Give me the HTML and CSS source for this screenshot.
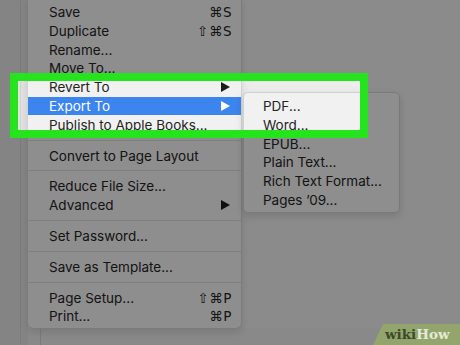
FILE: index.html
```html
<!DOCTYPE html>
<html>
<head>
<meta charset="utf-8">
<link rel="stylesheet" href="styles.css">
</head>
<body>
<div class="desktop">
  <div class="sidebar"><div class="sidebar-line"></div></div>
  <div class="window">
    <div class="window-top"></div>
    <div class="window-bottom"><div class="doc-edge"></div></div>
  </div>

  <div class="menu">
    <div class="item"><span>Save</span><span class="key">⌘S</span></div>
    <div class="item"><span>Duplicate</span><span class="key">⇧⌘S</span></div>
    <div class="item"><span>Rename...</span></div>
    <div class="item"><span>Move To...</span></div>
    <div class="item"><span>Revert To</span><span class="arrow"></span></div>
    <div class="item active"><span>Export To</span><span class="arrow"></span></div>
    <div class="item"><span>Publish to Apple Books...</span></div>
    <div class="sep"></div>
    <div class="item"><span>Convert to Page Layout</span></div>
    <div class="sep"></div>
    <div class="item"><span>Reduce File Size...</span></div>
    <div class="item"><span>Advanced</span><span class="arrow"></span></div>
    <div class="sep"></div>
    <div class="item"><span>Set Password...</span></div>
    <div class="sep"></div>
    <div class="item"><span>Save as Template...</span></div>
    <div class="sep"></div>
    <div class="item"><span>Page Setup...</span><span class="key">⇧⌘P</span></div>
    <div class="item"><span>Print...</span><span class="key">⌘P</span></div>
  </div>

  <div class="submenu">
    <div class="item sub"><span>PDF...</span></div>
    <div class="item sub"><span>Word...</span></div>
    <div class="item sub"><span>EPUB...</span></div>
    <div class="item sub"><span>Plain Text...</span></div>
    <div class="item sub"><span>Rich Text Format...</span></div>
    <div class="item sub"><span>Pages ’09...</span></div>
  </div>

  <div class="spotlight"></div>

  <div class="watermark"><span class="wiki">wiki</span><span class="how">How</span></div>
</div>
</body>
</html>
```

FILE: styles.css
```css
* { box-sizing: border-box; }
html, body {
  margin: 0;
  padding: 0;
  width: 460px;
  height: 345px;
  overflow: hidden;
}
body {
  font-family: Inter, "DejaVu Sans", sans-serif;
  font-size: 13.5px;
  color: #242424;
}
.desktop {
  position: relative;
  width: 460px;
  height: 345px;
  display: flex;
  background: #ececec;
}
.sidebar {
  width: 28px;
  flex: none;
  background: #e1e1e1;
  display: flex;
  justify-content: flex-end;
}
.sidebar-line {
  width: 1px;
  margin-right: 7px;
  background: #d2d2d2;
}
.window {
  flex: 1;
  display: flex;
  flex-direction: column;
}
.window-top { flex: 1; background: #ededed; }
.window-bottom {
  height: 17px;
  background: #e9e9e9;
  padding-left: 12px;
  display: flex;
}
.doc-edge {
  width: 1px;
  background: #d0d0d0;
}

.menu {
  position: absolute;
  left: 28px;
  top: -2px;
  width: 214px;
  padding: 4.6px 0 2.2px;
  background: #f1f1f1;
  border-right: 1px solid #d2d2d2;
  border-bottom: 1px solid #d2d2d2;
  border-radius: 0 0 6px 6px;
  box-shadow: 0 3px 8px rgba(0,0,0,0.12);
}
.item {
  height: 18.8px;
  display: flex;
  align-items: center;
  justify-content: space-between;
  padding: 0 9px 0 21px;
  white-space: nowrap;
}
.item.active {
  background: #3c84ee;
  color: #fff;
}
.key {
  font-family: "DejaVu Sans", sans-serif;
  font-size: 13.5px;
  letter-spacing: 0.5px;
}
.arrow {
  width: 0;
  height: 0;
  margin-right: 2px;
  border-left: 9px solid #1c1c1c;
  border-top: 5px solid transparent;
  border-bottom: 5px solid transparent;
}
.active .arrow { border-left-color: #fff; }
.sep {
  height: 1px;
  margin: 5.5px 0;
  background: #d8d8d8;
}

.submenu {
  position: absolute;
  left: 243px;
  top: 92px;
  width: 157px;
  height: 121px;
  padding-top: 3.6px;
  background: #f1f1f1;
  border: 1px solid #d0d0d0;
  border-radius: 5px;
  box-shadow: 0 3px 9px rgba(0,0,0,0.15);
}
.item.sub { padding-left: 19px; }

.spotlight {
  position: absolute;
  left: 10px;
  top: 73px;
  width: 358px;
  height: 65px;
  border: 8px solid #25e41d;
  box-shadow: 0 0 0 1200px rgba(0,0,0,0.41);
}

.watermark {
  position: absolute;
  right: 0;
  bottom: 0;
  width: 87px;
  height: 21px;
  background: #93a56c;
  clip-path: polygon(10px 0, 100% 0, 100% 100%, 0 100%);
  font-family: "DejaVu Serif", serif;
  font-weight: bold;
  font-size: 13.5px;
  line-height: 21px;
  padding-left: 12px;
}
.wiki { color: #3b4a2a; }
.how { color: #e4ead6; }
```
